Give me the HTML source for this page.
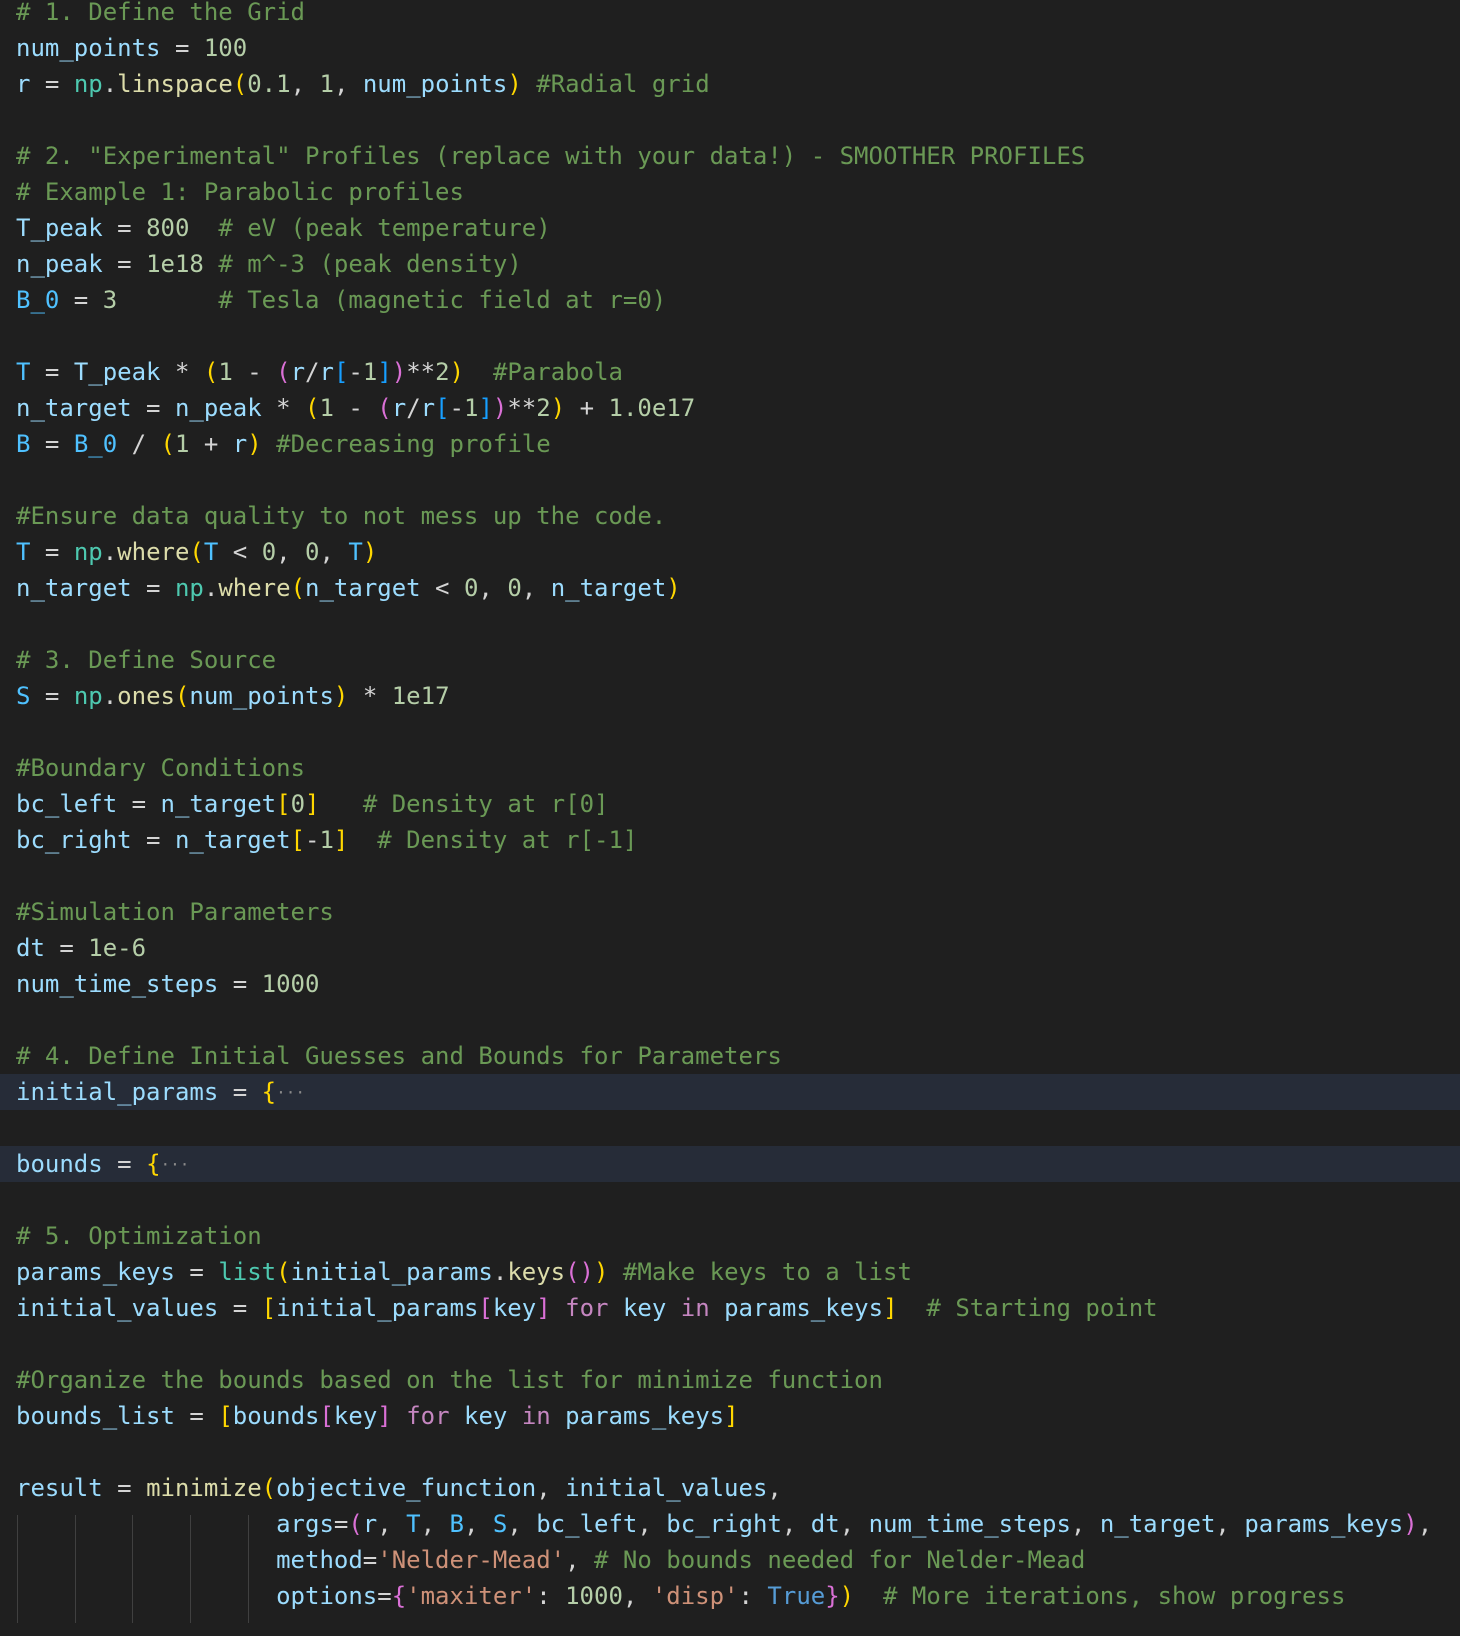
<!DOCTYPE html>
<html><head><meta charset="utf-8">
<style>
html,body{margin:0;padding:0;background:#1f1f1f;width:1460px;height:1636px;overflow:hidden}
#code{position:absolute;left:0;top:-6px;width:1460px;font-family:"DejaVu Sans Mono","Liberation Mono",monospace;font-size:24px;line-height:36px;color:#d4d4d4}
.l{height:36px;padding-left:16px;white-space:pre}
.hl{background:#262c38}
.c{color:#6a9955}.v{color:#9cdcfe}.k{color:#4fc1ff}.f{color:#dcdcaa}.n{color:#b5cea8}.s{color:#ce9178}
.t{color:#4ec9b0}.kw{color:#c586c0}.b1{color:#ffd700}.b2{color:#da70d6}.b3{color:#179fff}.bl{color:#569cd6}
.el{color:#8a8a8a;font-size:16px;vertical-align:2px}
.g{position:absolute;width:1px;background:#404040}
</style></head><body>
<div id="code"><div class="l"><span class="c"># 1. Define the Grid</span></div><div class="l"><span class="v">num_points</span> = <span class="n">100</span></div><div class="l"><span class="v">r</span> = <span class="t">np</span>.<span class="f">linspace</span><span class="b1">(</span><span class="n">0.1</span>, <span class="n">1</span>, <span class="v">num_points</span><span class="b1">)</span> <span class="c">#Radial grid</span></div><div class="l"></div><div class="l"><span class="c"># 2. "Experimental" Profiles (replace with your data!) - SMOOTHER PROFILES</span></div><div class="l"><span class="c"># Example 1: Parabolic profiles</span></div><div class="l"><span class="v">T_peak</span> = <span class="n">800</span>  <span class="c"># eV (peak temperature)</span></div><div class="l"><span class="v">n_peak</span> = <span class="n">1e18</span> <span class="c"># m^-3 (peak density)</span></div><div class="l"><span class="k">B_0</span> = <span class="n">3</span>       <span class="c"># Tesla (magnetic field at r=0)</span></div><div class="l"></div><div class="l"><span class="k">T</span> = <span class="v">T_peak</span> * <span class="b1">(</span><span class="n">1</span> - <span class="b2">(</span><span class="v">r</span>/<span class="v">r</span><span class="b3">[</span>-<span class="n">1</span><span class="b3">]</span><span class="b2">)</span>**<span class="n">2</span><span class="b1">)</span>  <span class="c">#Parabola</span></div><div class="l"><span class="v">n_target</span> = <span class="v">n_peak</span> * <span class="b1">(</span><span class="n">1</span> - <span class="b2">(</span><span class="v">r</span>/<span class="v">r</span><span class="b3">[</span>-<span class="n">1</span><span class="b3">]</span><span class="b2">)</span>**<span class="n">2</span><span class="b1">)</span> + <span class="n">1.0e17</span></div><div class="l"><span class="k">B</span> = <span class="k">B_0</span> / <span class="b1">(</span><span class="n">1</span> + <span class="v">r</span><span class="b1">)</span> <span class="c">#Decreasing profile</span></div><div class="l"></div><div class="l"><span class="c">#Ensure data quality to not mess up the code.</span></div><div class="l"><span class="k">T</span> = <span class="t">np</span>.<span class="f">where</span><span class="b1">(</span><span class="k">T</span> &lt; <span class="n">0</span>, <span class="n">0</span>, <span class="k">T</span><span class="b1">)</span></div><div class="l"><span class="v">n_target</span> = <span class="t">np</span>.<span class="f">where</span><span class="b1">(</span><span class="v">n_target</span> &lt; <span class="n">0</span>, <span class="n">0</span>, <span class="v">n_target</span><span class="b1">)</span></div><div class="l"></div><div class="l"><span class="c"># 3. Define Source</span></div><div class="l"><span class="k">S</span> = <span class="t">np</span>.<span class="f">ones</span><span class="b1">(</span><span class="v">num_points</span><span class="b1">)</span> * <span class="n">1e17</span></div><div class="l"></div><div class="l"><span class="c">#Boundary Conditions</span></div><div class="l"><span class="v">bc_left</span> = <span class="v">n_target</span><span class="b1">[</span><span class="n">0</span><span class="b1">]</span>   <span class="c"># Density at r[0]</span></div><div class="l"><span class="v">bc_right</span> = <span class="v">n_target</span><span class="b1">[</span>-<span class="n">1</span><span class="b1">]</span>  <span class="c"># Density at r[-1]</span></div><div class="l"></div><div class="l"><span class="c">#Simulation Parameters</span></div><div class="l"><span class="v">dt</span> = <span class="n">1e-6</span></div><div class="l"><span class="v">num_time_steps</span> = <span class="n">1000</span></div><div class="l"></div><div class="l"><span class="c"># 4. Define Initial Guesses and Bounds for Parameters</span></div><div class="l hl"><span class="v">initial_params</span> = <span class="b1">{</span><span class="el">···</span></div><div class="l"></div><div class="l hl"><span class="v">bounds</span> = <span class="b1">{</span><span class="el">···</span></div><div class="l"></div><div class="l"><span class="c"># 5. Optimization</span></div><div class="l"><span class="v">params_keys</span> = <span class="t">list</span><span class="b1">(</span><span class="v">initial_params</span>.<span class="f">keys</span><span class="b2">()</span><span class="b1">)</span> <span class="c">#Make keys to a list</span></div><div class="l"><span class="v">initial_values</span> = <span class="b1">[</span><span class="v">initial_params</span><span class="b2">[</span><span class="v">key</span><span class="b2">]</span> <span class="kw">for</span> <span class="v">key</span> <span class="kw">in</span> <span class="v">params_keys</span><span class="b1">]</span>  <span class="c"># Starting point</span></div><div class="l"></div><div class="l"><span class="c">#Organize the bounds based on the list for minimize function</span></div><div class="l"><span class="v">bounds_list</span> = <span class="b1">[</span><span class="v">bounds</span><span class="b2">[</span><span class="v">key</span><span class="b2">]</span> <span class="kw">for</span> <span class="v">key</span> <span class="kw">in</span> <span class="v">params_keys</span><span class="b1">]</span></div><div class="l"></div><div class="l"><span class="v">result</span> = <span class="f">minimize</span><span class="b1">(</span><span class="v">objective_function</span>, <span class="v">initial_values</span>,</div><div class="l">                  <span class="v">args</span>=<span class="b2">(</span><span class="v">r</span>, <span class="k">T</span>, <span class="k">B</span>, <span class="k">S</span>, <span class="v">bc_left</span>, <span class="v">bc_right</span>, <span class="v">dt</span>, <span class="v">num_time_steps</span>, <span class="v">n_target</span>, <span class="v">params_keys</span><span class="b2">)</span>,</div><div class="l">                  <span class="v">method</span>=<span class="s">'Nelder-Mead'</span>, <span class="c"># No bounds needed for Nelder-Mead</span></div><div class="l">                  <span class="v">options</span>=<span class="b2">{</span><span class="s">'maxiter'</span>: <span class="n">1000</span>, <span class="s">'disp'</span>: <span class="bl">True</span><span class="b2">}</span><span class="b1">)</span>  <span class="c"># More iterations, show progress</span></div></div>
<div class="g" style="left:17px;top:1515px;height:108px"></div>
<div class="g" style="left:75px;top:1515px;height:108px"></div>
<div class="g" style="left:132px;top:1515px;height:108px"></div>
<div class="g" style="left:190px;top:1515px;height:108px"></div>
<div class="g" style="left:248px;top:1515px;height:108px"></div>
</body></html>
